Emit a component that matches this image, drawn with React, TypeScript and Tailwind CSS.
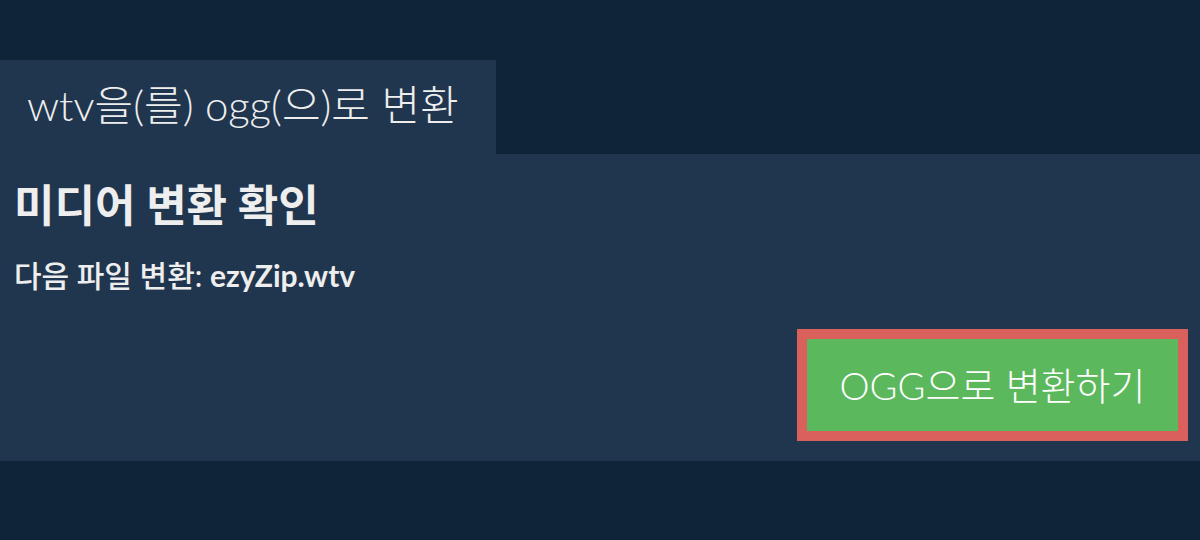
import React from 'react';

const App = () => {
  return (
    <div className="h-[540px] w-[1200px] bg-[#0f2339] pt-[60px] font-['Lato','Noto_Sans_CJK_KR',sans-serif] text-[#eeeeee]">
      {/* Tab */}
      <div className="flex h-[94px] w-[496px] items-center bg-[#20364e] pb-[4px] pl-[27px]">
        <span className="text-[42px] font-light leading-none whitespace-nowrap">wtv을(를) ogg(으)로 변환</span>
      </div>

      {/* Panel */}
      <div className="flex h-[307px] flex-col bg-[#20364e] px-[14px]">
        <h1 className="mt-[23px] text-[44px] font-bold leading-[56px]">미디어 변환 확인</h1>
        <p className="mt-[24px] text-[30px] font-medium leading-[36px]">
          다음 파일 변환: <b className="font-bold">ezyZip.wtv</b>
        </p>
        <div className="mt-[36px] flex justify-end">
          <button className="-mr-[2px] flex h-[112px] w-[391px] items-center justify-center border-[10px] border-[#d9605b] bg-[#5cb85c] text-[38px] font-light text-white">
            OGG으로 변환하기
          </button>
        </div>
      </div>
    </div>
  );
};

export default App;
